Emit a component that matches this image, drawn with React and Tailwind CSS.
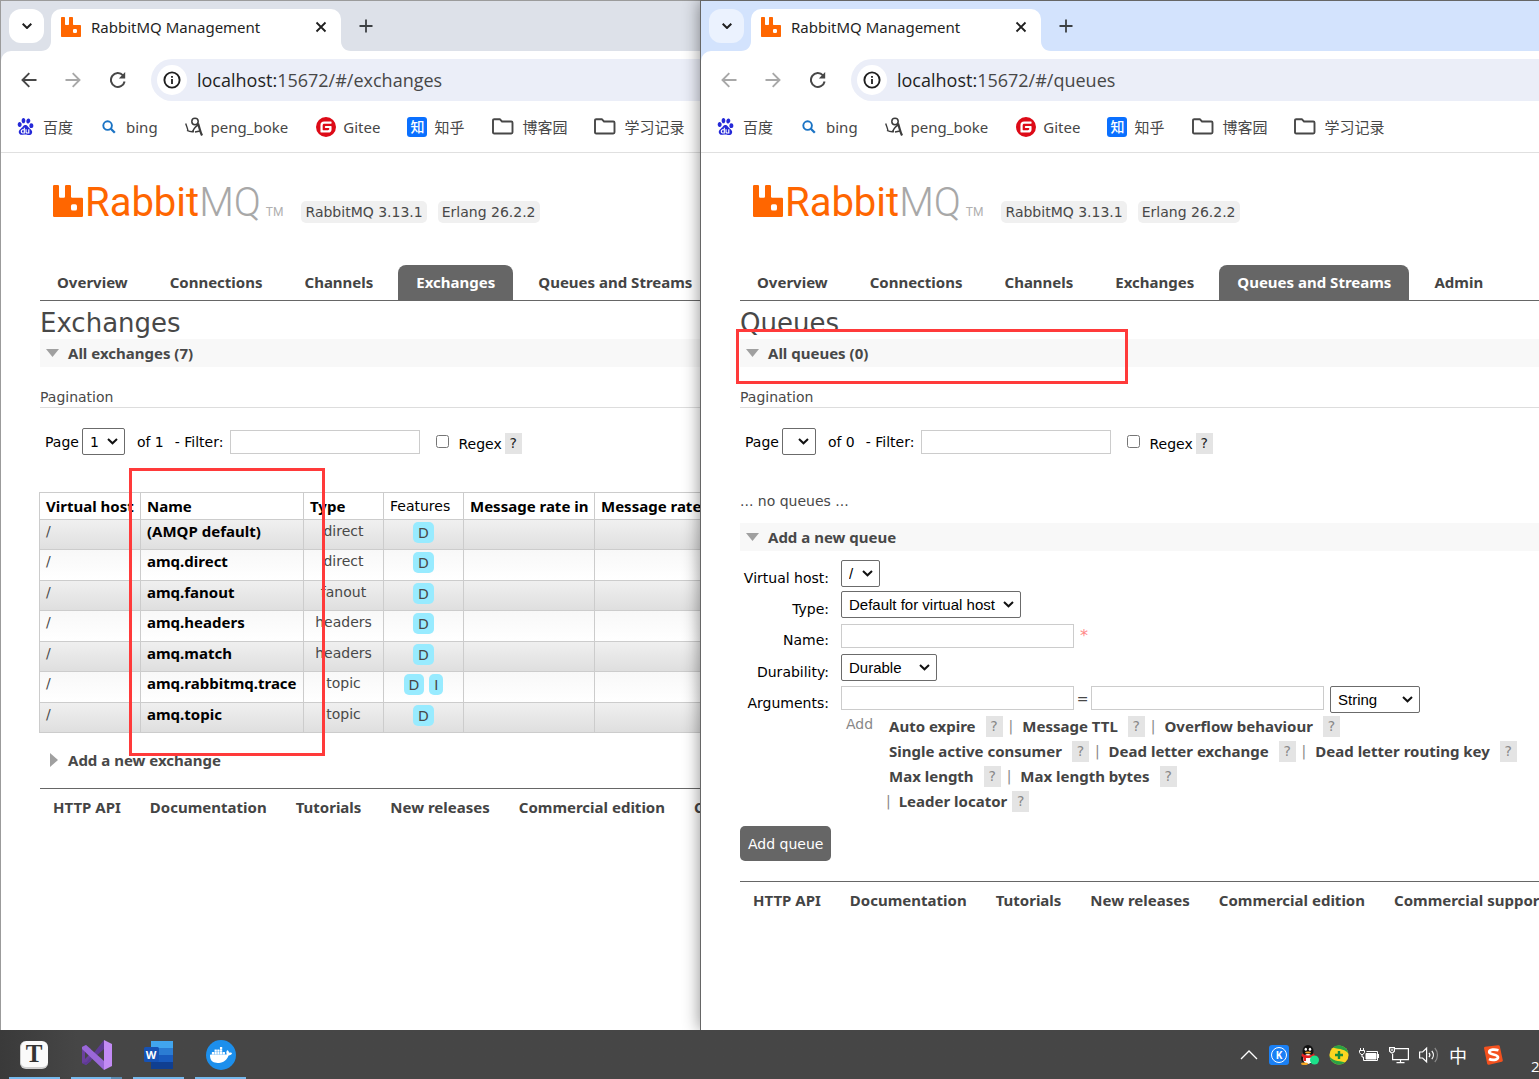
import React from "react";
import { SiRabbitmq, SiBaidu, SiGitee, SiDocker } from "react-icons/si";

const UI = "font-['Noto_Sans','Noto_Sans_CJK_SC',sans-serif]";
const PAGE = "font-['DejaVu_Sans',sans-serif]";
const STRONG = "font-['Noto_Sans',sans-serif] text-[15px] font-bold ";

/* ---------- browser chrome ---------- */

function TabFoot({ flip }) {
  return (
    <svg viewBox="0 0 10 10" className={flip ? "size-[10px] self-end -scale-x-100" : "size-[10px] self-end"}>
      <path d="M10 0v10H0C6 10 10 6 10 0z" fill="#fff" />
    </svg>
  );
}

function TabStrip({ active }) {
  return (
    <div className={active ? "flex h-[50px] items-stretch bg-[#d3e3fd] pl-2" : "flex h-[50px] items-stretch bg-[#dde1e9] pl-2"}>
      <button
        aria-label="Search tabs"
        className={
          active
            ? "mt-2 flex h-[34px] w-[35px] shrink-0 items-center justify-center rounded-xl bg-[#ebf2fe]"
            : "mt-2 flex h-[34px] w-[35px] shrink-0 items-center justify-center rounded-xl bg-white"
        }
      >
        <svg viewBox="0 0 10 6" className="h-[6px] w-[10px]" fill="none" stroke="#1f1f1f" strokeWidth="2">
          <path d="M0.7 0.7L5 5l4.3-4.3" />
        </svg>
      </button>
      <div className="-ml-[3px] flex shrink-0">
        <TabFoot />
        <div className="mt-2 flex w-[290px] items-center rounded-t-[10px] bg-white pr-[14px] pb-[7px] pl-[10px]">
          <SiRabbitmq className="size-5 shrink-0 text-[#ff6600]" />
          <span className="ml-[10px] flex-1 text-[15px] leading-5 text-[#1f1f1f]">RabbitMQ Management</span>
          <button aria-label="Close tab">
            <svg viewBox="0 0 12 12" className="size-3" fill="none" stroke="#1f1f1f" strokeWidth="1.8">
              <path d="M1.5 1.5l9 9m0-9l-9 9" />
            </svg>
          </button>
        </div>
        <TabFoot flip />
      </div>
      <button aria-label="New tab" className="ml-2 flex items-center">
        <svg viewBox="0 0 14 14" className="size-[14px]" fill="none" stroke="#3c4043" strokeWidth="1.8">
          <path d="M7 0.5v13M0.5 7h13" />
        </svg>
      </button>
    </div>
  );
}

function Arrow({ flip, dim }) {
  return (
    <svg
      viewBox="0 0 16 16"
      className={flip ? "size-4 -scale-x-100" : "size-4"}
      fill="none"
      stroke={dim ? "#a8a8a8" : "#474747"}
      strokeWidth="1.9"
    >
      <path d="M15.5 8H1.8M8.3 1.2L1.5 8l6.8 6.8" />
    </svg>
  );
}

function Toolbar({ path, active }) {
  return (
    <div className={active ? "bg-[#d3e3fd]" : "bg-[#dde1e9]"}>
      <div className="flex h-[50px] items-end rounded-tl-[10px] bg-white">
        <div className="flex h-[42px] items-center pl-5">
          <button aria-label="Back">
            <Arrow dim={active} />
          </button>
          <button aria-label="Forward" className="ml-7">
            <Arrow flip dim />
          </button>
          <button aria-label="Reload" className="ml-[29px]">
            <svg viewBox="0 0 16 16" className="size-4" fill="none" stroke="#474747" strokeWidth="2">
              <path d="M14.6 9.5A6.9 6.9 0 1 1 13 3.4" />
              <path d="M15.2 0v6.4H8.8z" fill="#474747" stroke="none" />
            </svg>
          </button>
        </div>
        <div className="ml-[25px] flex h-[42px] flex-1 items-center rounded-l-full bg-[#ebeef8] pl-[6px]">
          <button aria-label="Site information" className="flex size-[30px] items-center justify-center rounded-full bg-white">
            <svg viewBox="0 0 18 18" className="size-[18px]">
              <circle cx="9" cy="9" r="7.6" fill="none" stroke="#1f1f1f" strokeWidth="1.9" />
              <path d="M8.1 8h1.8v5H8.1zM8.1 5h1.8v1.8H8.1z" fill="#1f1f1f" />
            </svg>
          </button>
          <span className="ml-[10px] font-['Open_Sans',sans-serif] text-[18px] leading-6 whitespace-nowrap text-[#474747]">
            <span className="text-[#1f1f1f]">localhost:</span>15672/#/{path}
          </span>
        </div>
      </div>
    </div>
  );
}

function FolderIcon() {
  return (
    <svg viewBox="0 0 22 17" className="h-[17px] w-[22px]" fill="none" stroke="#474747" strokeWidth="1.9">
      <path d="M2.2 1.2h5.6l2.2 2.3h9.3q1.2 0 1.2 1.2v9.6q0 1.2-1.2 1.2H2.2Q1 15.5 1 14.3V2.4q0-1.200 1.200-1.200z" />
    </svg>
  );
}

function Bookmark({ className, icon, children }) {
  return (
    <a href="#bookmark" className={"flex shrink-0 items-center text-[15px] leading-5 whitespace-nowrap text-[#474747] " + className}>
      {icon}
      <span>{children}</span>
    </a>
  );
}

function Bookmarks() {
  return (
    <nav className="flex h-[52px] items-center overflow-hidden border-b border-[#e0e0e0] bg-white pl-4">
      <Bookmark className="gap-[9px]" icon={<SiBaidu className="size-[17px] text-[#2529d8]" />}>
        百度
      </Bookmark>
      <Bookmark
        className="ml-[29px] gap-[10px]"
        icon={
          <svg viewBox="0 0 14 14" className="size-[14px]" fill="none" stroke="#1a73c4">
            <circle cx="5.600" cy="5.600" r="4.300" strokeWidth="1.900" />
            <path d="M8.800 8.800l4 4" strokeWidth="2.300" />
          </svg>
        }
      >
        bing
      </Bookmark>
      <Bookmark
        className="ml-[27px] gap-2"
        icon={
          <svg viewBox="0 0 18 20" className="h-5 w-[18px]" fill="none" stroke="#3c3c3c">
            <circle cx="10" cy="4.500" r="3.200" strokeWidth="1.500" />
            <path d="M0.700 6.500c0.800 2 1.300 4 2.200 6.500" strokeWidth="1.400" />
            <path d="M13 6.500c1.400 3.500 2 8 4 12" strokeWidth="2.200" />
            <path d="M2 13.300c2.500 1.300 4.500 1.700 7 1.200M13.500 8c-3 0.800-4.500 3.500-6 6.500M15 14l-5 1" strokeWidth="1.500" />
          </svg>
        }
      >
        peng_boke
      </Bookmark>
      <Bookmark className="ml-7 gap-[7px]" icon={<SiGitee className="size-5 text-[#dd0a17]" />}>
        Gitee
      </Bookmark>
      <Bookmark
        className="ml-[27px] gap-[7px]"
        icon={
          <span className="flex size-5 items-center justify-center rounded-[3px] bg-[#0a70ff] text-[14px] leading-none font-medium text-white">
            知
          </span>
        }
      >
        知乎
      </Bookmark>
      <Bookmark className="ml-7 gap-2" icon={<FolderIcon />}>
        博客园
      </Bookmark>
      <Bookmark className="ml-[27px] gap-2" icon={<FolderIcon />}>
        学习记录
      </Bookmark>
    </nav>
  );
}

function BrowserWindow({ path, active, children }) {
  return (
    <section
      className={
        active
          ? "relative z-10 flex min-w-0 flex-col border-t border-l border-[#666666] bg-white shadow-[0_0_16px_rgba(0,0,0,0.45)]"
          : "relative flex min-w-0 flex-col overflow-hidden border-t border-l border-[#9b9b9b] bg-white"
      }
    >
      <div className={UI}>
        <TabStrip active={active} />
        <Toolbar path={path} active={active} />
        <Bookmarks />
      </div>
      <main className={"relative flex-1 overflow-hidden pl-[39px] text-[14px] leading-[18px] whitespace-nowrap text-[#484848] " + PAGE}>
        {children}
      </main>
    </section>
  );
}

/* ---------- management page ---------- */

function Logo() {
  return (
    <a href="#/" aria-label="RabbitMQ" className="flex h-8 items-end font-['Roboto',sans-serif]">
      <svg viewBox="0 0 24 24" preserveAspectRatio="none" className="h-8 w-[30px]" fill="#ff6600">
        <path d="M23.035 9.601h-7.677a.956.956 0 01-.962-.962V.962a.956.956 0 00-.962-.956H10.560a.956.956 0 00-.962.956V8.640a.956.956 0 01-.962.962H5.762a.956.956 0 01-.961-.962V.962A.956.956 0 003.839 0H.959a.956.956 0 00-.956.962v22.076A.956.956 0 00.965 24h22.070a.956.956 0 00.962-.962V10.580a.956.956 0 00-.962-.980zm-3.860 8.152a1.437 1.437 0 01-1.437 1.443h-1.924a1.437 1.437 0 01-1.436-1.443v-1.917a1.437 1.437 0 011.436-1.443h1.924a1.437 1.437 0 011.437 1.443z" />
      </svg>
      <span className="ml-[2px] text-[40px] leading-7 text-[#ff6600]">Rabbit</span>
      <span className="text-[40px] leading-7 font-light text-[#a8a8a8]">MQ</span>
      <span className="ml-[5px] text-[12px] leading-[10px] text-[#b0b0b0]">TM</span>
    </a>
  );
}

const MENU = ["Overview", "Connections", "Channels", "Exchanges", "Queues and Streams", "Admin"];

function Header({ current, items = MENU }) {
  return (
    <>
      <header className="flex items-end pt-8 pl-[13px]">
        <Logo />
        <div className="-mb-[6px] ml-[18px] flex gap-[11px]">
          <span className="rounded-[5px] bg-[#f0f0f0] px-[4px] py-[2px]">RabbitMQ 3.13.1</span>
          <span className="rounded-[5px] bg-[#f0f0f0] px-[4px] py-[2px]">Erlang 26.2.2</span>
        </div>
      </header>
      <nav className={"mt-12 flex gap-2 border-b border-[#666666] " + STRONG}>
        {items.map((m) => (
          <a
            key={m}
            href={"#/" + m}
            className={
              m === current
                ? "rounded-t-[8px] bg-[#666666] px-[18px] pt-2 pb-[9px] leading-[18px] text-white"
                : "px-[17px] pt-2 pb-[9px] leading-[18px] text-[#444444]"
            }
          >
            {m}
          </a>
        ))}
      </nav>
    </>
  );
}

function SectionTitle({ open, children }) {
  return (
    <h2 className={(open ? "flex h-7 items-center bg-[#f8f8f8] " : "flex h-7 items-center ") + STRONG}>
      <button className="flex items-center">
        <span className="flex w-7 items-center pl-[6px]">
          {open ? (
            <svg viewBox="0 0 13 8" className="h-2 w-[13px]">
              <path d="M0 0h13L6.500 8z" fill="#a0a0a0" />
            </svg>
          ) : (
            <svg viewBox="0 0 8 14" className="ml-1 h-[14px] w-2">
              <path d="M0 0v14l8-7z" fill="#a0a0a0" />
            </svg>
          )}
        </span>
        {children}
      </button>
    </h2>
  );
}

function Help({ dim, className }) {
  return (
    <button
      type="button"
      aria-label="Help"
      className={(dim ? "text-[#888888] " : "text-[#222222] ") + "h-[21px] w-[17px] bg-[#e4e4e4] text-center leading-[21px] " + className}
    >
      ?
    </button>
  );
}

function Select({ options, className, wrap = "", ...rest }) {
  return (
    <span className={"relative flex " + wrap}>
      <select {...rest} className={"h-[27px] appearance-none rounded-[2px] border border-[#6b6b6b] bg-white pl-[7px] text-black " + className}>
        {options.map((o) => (
          <option key={o}>{o}</option>
        ))}
      </select>
      <svg
        viewBox="0 0 11 7"
        className="pointer-events-none absolute top-[10px] right-[7px] h-[7px] w-[11px]"
        fill="none"
        stroke="#111"
        strokeWidth="2"
      >
        <path d="M1 1l4.500 4.300L10 1" />
      </svg>
    </span>
  );
}

function Pagination({ id, total, options, selectClass }) {
  return (
    <>
      <h3 className="mt-[21px] border-b border-[#dddddd] pb-px">Pagination</h3>
      <div className="mt-5 flex h-[27px] items-center pl-[5px] text-black">
        <label htmlFor={id + "-page"}>Page</label>
        <Select id={id + "-page"} options={options} wrap="ml-[3px]" className={selectClass} />
        <span className="ml-3">of {total}</span>
        <label htmlFor={id + "-filter"} className="ml-[11px]">
          - Filter:
        </label>
        <input id={id + "-filter"} type="text" className="ml-[7px] h-6 w-[190px] border border-[#cccccc] bg-white" />
        <input id={id + "-regex"} type="checkbox" className="ml-4 size-[13px]" />
        <label htmlFor={id + "-regex"} className="ml-[9px] pt-1">
          Regex
        </label>
        <Help className="mt-[3px] ml-[3px]" />
      </div>
    </>
  );
}

const EXCHANGES = [
  ["(AMQP default)", "direct", ["D"]],
  ["amq.direct", "direct", ["D"]],
  ["amq.fanout", "fanout", ["D"]],
  ["amq.headers", "headers", ["D"]],
  ["amq.match", "headers", ["D"]],
  ["amq.rabbitmq.trace", "topic", ["D", "I"]],
  ["amq.topic", "topic", ["D"]],
];

function ExchangeTable() {
  const cell = "border border-[#cccccc] px-[6px] pt-[2px] align-top";
  const head = "border border-[#cccccc] px-[6px] text-left " + STRONG;
  return (
    <table className="mt-[37px] -ml-px h-[241px] w-[764px] table-fixed border-collapse">
      <colgroup>
        <col className="w-[101px]" />
        <col className="w-[163px]" />
        <col className="w-20" />
        <col className="w-20" />
        <col className="w-[131px]" />
        <col />
      </colgroup>
      <thead className="text-black">
        <tr className="h-[27px]">
          <th className={head}>Virtual host</th>
          <th className={head}>Name</th>
          <th className={head}>Type</th>
          <th className="border border-[#cccccc] px-[6px] text-left font-normal">Features</th>
          <th className={head}>Message rate in</th>
          <th className={head}>Message rate out</th>
        </tr>
      </thead>
      <tbody>
        {EXCHANGES.map(([name, type, features], i) => (
          <tr
            key={name}
            className={i % 2 === 0 ? "bg-linear-to-b from-[#f0f0f0] to-[#dfdfdf]" : "bg-linear-to-b from-[#f8f8f8] to-white"}
          >
            <td className={cell}>/</td>
            <td className={cell}>
              <a href={"#/exchanges/" + name} className={STRONG + "text-black"}>
                {name}
              </a>
            </td>
            <td className={cell + " text-center"}>{type}</td>
            <td className="border border-[#cccccc] pt-[2px] align-top">
              <div className="flex justify-center gap-[5px]">
                {features.map((f) => (
                  <abbr key={f} className="rounded-[5px] bg-[#98ebff] px-[5px] pt-[2px] pb-px">
                    {f}
                  </abbr>
                ))}
              </div>
            </td>
            <td className={cell} />
            <td className={cell} />
          </tr>
        ))}
      </tbody>
    </table>
  );
}

const LINKS = ["HTTP API", "Documentation", "Tutorials", "New releases", "Commercial edition", "Commercial support"];

function Footer({ className }) {
  return (
    <footer className={"flex gap-[29px] border-t border-[#666666] pt-[9px] pl-[13px] " + STRONG + className}>
      {LINKS.map((l) => (
        <a key={l} href="#footer" className="shrink-0 leading-[18px] text-[#444444]">
          {l}
        </a>
      ))}
    </footer>
  );
}

function ExchangesPage() {
  return (
    <>
      <Header current="Exchanges" items={MENU.slice(0, 5)} />
      <h1 className="pt-[6px] text-[26px] leading-8">Exchanges</h1>
      <SectionTitle open>All exchanges (7)</SectionTitle>
      <Pagination id="ex" total="1" options={["1"]} selectClass="w-[43px]" />
      <ExchangeTable />
      <div className="mt-[13px]">
        <SectionTitle>Add a new exchange</SectionTitle>
      </div>
      <Footer className="mt-[14px]" />
      <div className="pointer-events-none absolute top-[315px] left-[128px] h-[288px] w-[196px] border-3 border-[#ff3a3a]" />
    </>
  );
}

const SELECT = "font-['Liberation_Sans',sans-serif] text-[15px] ";
const FIELD = "h-6 w-[233px] border border-[#cccccc] bg-white";

function Row({ id, label, className, children }) {
  return (
    <div className={"flex items-start " + className}>
      <label htmlFor={id} className="w-[89px] shrink-0 pt-[9px] text-right text-black">
        {label}
      </label>
      <div className="ml-3 flex items-start">{children}</div>
    </div>
  );
}

const ARGUMENTS = [
  ["Auto expire", "Message TTL", "Overflow behaviour"],
  ["Single active consumer", "Dead letter exchange", "Dead letter routing key"],
  ["Max length", "Max length bytes"],
];

function QueueForm() {
  return (
    <form className="pt-[9px]" onSubmit={(e) => e.preventDefault()}>
      <Row id="vhost" label="Virtual host:" className="h-[31px]">
        <Select id="vhost" options={["/"]} className={SELECT + "w-[39px]"} />
      </Row>
      <Row id="qtype" label="Type:" className="h-[31px]">
        <Select id="qtype" options={["Default for virtual host"]} className={SELECT + "w-[180px]"} />
      </Row>
      <Row id="qname" label="Name:" className="h-8">
        <input id="qname" type="text" className={FIELD + " mt-[2px]"} />
        <span className="ml-[6px] pt-[5px] text-[16px] text-[#ff8888]">*</span>
      </Row>
      <Row id="durability" label="Durability:" className="h-[31px]">
        <Select id="durability" options={["Durable"]} className={SELECT + "w-24"} />
      </Row>
      <Row id="argkey" label="Arguments:" className="h-[29px]">
        <input id="argkey" type="text" className={FIELD + " mt-px"} />
        <span className="w-[17px] pt-[5px] text-center">=</span>
        <input aria-label="Argument value" type="text" className={FIELD + " mt-px"} />
        <Select aria-label="Argument type" options={["String"]} wrap="mt-px ml-[6px]" className={SELECT + "w-[90px]"} />
      </Row>
      <div className="flex pl-[106px] leading-[25px] text-[#888888]">
        <span className="-mt-[2px] w-10">Add</span>
        <div>
          {ARGUMENTS.map((line) => (
            <div key={line[0]} className="flex h-[25px] items-center pl-[3px]">
              {line.map((a, i) => (
                <React.Fragment key={a}>
                  {i > 0 && <span className="mr-[9px] ml-[6px]">|</span>}
                  <button type="button" className={STRONG + "leading-[23px] text-[#444444]"}>
                    {a}
                  </button>
                  <Help dim className="ml-[10px]" />
                </React.Fragment>
              ))}
            </div>
          ))}
          <div className="flex h-[25px] items-center">
            <span>|</span>
            <button type="button" className={"ml-2 leading-[23px] text-[#444444] " + STRONG}>
              Leader locator
            </button>
            <Help dim className="ml-[5px]" />
          </div>
        </div>
      </div>
      <button type="submit" className="mt-3 h-[35px] rounded-[5px] bg-[#666666] px-2 text-white">
        Add queue
      </button>
    </form>
  );
}

function QueuesPage() {
  return (
    <>
      <Header current="Queues and Streams" />
      <h1 className="pt-[6px] text-[26px] leading-8">Queues</h1>
      <SectionTitle open>All queues (0)</SectionTitle>
      <Pagination id="q" total="0" options={[""]} selectClass="w-[34px]" />
      <p className="mt-[37px] mb-[13px]">... no queues ...</p>
      <SectionTitle open>Add a new queue</SectionTitle>
      <QueueForm />
      <Footer className="mt-5" />
      <div className="pointer-events-none absolute top-[176px] left-[35px] h-[55px] w-[392px] border-3 border-[#ff3a3a]" />
    </>
  );
}

/* ---------- taskbar ---------- */

function TaskButton({ label, children, split }) {
  return (
    <button aria-label={label} className="flex w-[51px] flex-col items-center">
      <span className="flex flex-1 items-center pt-[2px]">{children}</span>
      <span className="flex h-[2px] w-full bg-[#76b9ed]">{split && <span className="ml-auto h-full w-[11px] bg-[#5b8cb2]" />}</span>
    </button>
  );
}

function Taskbar() {
  return (
    <footer className="flex h-[49px] shrink-0 items-stretch overflow-hidden bg-linear-to-r from-[#3a3a3a] to-[#464646] to-5% text-white">
      <div className="flex gap-[11px] pl-[9px]">
        <TaskButton label="Typora">
          <span className="mr-[2px] flex size-7 items-center justify-center rounded-[6px] border-b-2 border-l border-[#cfcfcf] bg-[#fafafa] font-['Liberation_Serif',serif] text-[25px] leading-none font-bold text-[#333333]">
            T
          </span>
        </TaskButton>
        <TaskButton label="Visual Studio" split>
          <svg viewBox="0 0 30 30" className="size-[30px]">
            <path d="M0 7l4-2 5 4v12l-5 4-4-2z" fill="#6a3f9e" />
            <path d="M0 23l4.500-1L22 0v9L4 25z" fill="#5e3a94" />
            <path d="M0 7l4-2L22 21v9L0 9z" fill="#9a68d8" />
            <path d="M22 0l8 4v22l-8 4z" fill="#c38bf5" />
            <path d="M3 12l3.500 3.500L3 19z" fill="#464646" />
          </svg>
        </TaskButton>
        <TaskButton label="Word">
          <span className="relative">
            <svg viewBox="0 0 30 28" className="h-7 w-[30px]">
              <path d="M7 0h22v7H7z" fill="#41a5ee" />
              <path d="M7 7h22v7H7z" fill="#2b7cd3" />
              <path d="M7 14h22v7H7z" fill="#185abd" />
              <path d="M7 21h22v7H7z" fill="#103f91" />
              <rect y="6" width="15" height="15" rx="1.500" fill="#1652b4" />
            </svg>
            <span className="absolute top-[6px] left-0 w-[15px] text-center font-['Open_Sans',sans-serif] text-[11px] leading-[15px] font-bold">
              W
            </span>
          </span>
        </TaskButton>
        <TaskButton label="Docker">
          <span className="flex size-[30px] items-center justify-center rounded-full bg-[#1c8fec]">
            <SiDocker className="size-[22px] text-white" />
          </span>
        </TaskButton>
      </div>
      <div className="ml-auto flex items-center gap-[10px]">
        <svg viewBox="0 0 18 10" className="mr-px h-[10px] w-[18px]" fill="none" stroke="#fff" strokeWidth="1.300">
          <path d="M1 9l8-8 8 8" />
        </svg>
        <span className="flex size-5 items-center justify-center rounded-[3px] bg-[#1a80f5]">
          <span className="flex size-4 items-center justify-center rounded-full border border-white font-['Open_Sans',sans-serif] text-[10px] leading-none font-bold">
            K
          </span>
        </span>
        <svg viewBox="0 0 20 20" className="size-5">
          <ellipse cx="9.500" cy="13.500" rx="7.500" ry="5.500" fill="#111" />
          <ellipse cx="9" cy="6" rx="5.500" ry="6" fill="#111" />
          <ellipse cx="9" cy="14" rx="4.800" ry="5" fill="#fff" />
          <path d="M3 8.500c4 2.500 8 2.500 12 0l1 2.500c-4 2-7 2.300-9 2v3H4.500v-3.500L2.500 11z" fill="#e32020" />
          <ellipse cx="6.800" cy="4.300" rx="1.200" ry="1.500" fill="#fff" />
          <ellipse cx="11" cy="4.300" rx="1.200" ry="1.500" fill="#fff" />
          <ellipse cx="9" cy="7.400" rx="3" ry="1" fill="#f5a623" />
          <ellipse cx="5.500" cy="18.700" rx="3.500" ry="1.300" fill="#f5a623" />
          <circle cx="15.500" cy="15" r="4.500" fill="#1ce08a" />
        </svg>
        <svg viewBox="0 0 20 20" className="size-5">
          <circle cx="10" cy="10" r="9.600" fill="#fcd521" />
          <path d="M4 2.500A9.600 9.600 0 0 1 19.500 9C17 4 11 4.500 4 2.500zM16 17.500A9.600 9.600 0 0 1 0.500 11C3 16 9 15.500 16 17.500z" fill="#2ba245" />
          <path d="M10 6v8M6 10h8" stroke="#1b8c3a" strokeWidth="2.400" />
        </svg>
        <svg viewBox="0 0 20 14" className="h-[14px] w-5" fill="none" stroke="#fff">
          <path d="M7.500 3.500h11v9h-14V9M19.500 6v4" />
          <path d="M7 5.500h10v5.500H7z" fill="#fff" />
          <path d="M1.500 0v2.500M4.500 0v2.500M0.500 2.500h5v2l-1.500 2h-2l-1.500-2zM3 6.500V9h1.500" />
        </svg>
        <svg viewBox="0 0 20 18" className="h-[18px] w-5" fill="none" stroke="#fff" strokeWidth="1.200">
          <path d="M6 2.600h13.400v11H3.600V8M11.500 13.600v3M7.500 16.600h8" />
          <path d="M0.600 1.600h4.800v3.600L3.600 7h-1L0.600 5.200zM3 3v2" />
        </svg>
        <svg viewBox="0 0 20 18" className="h-[18px] w-5" fill="none" stroke="#fff" strokeWidth="1.200">
          <path d="M0.600 6v6h3l4 3.800V2.200L3.600 6z" />
          <path d="M10 6.800a3.500 3.500 0 0 1 0 4.400M12.800 4.800a6.500 6.500 0 0 1 0 8.400" />
          <path d="M15.800 2a10.500 10.500 0 0 1 0 14" stroke="#8c8c8c" />
        </svg>
        <span className="font-['Noto_Sans_CJK_SC',sans-serif] text-[18px] leading-5">中</span>
        <svg viewBox="0 0 20 20" className="ml-[6px] size-5">
          <path d="M1 3Q1 2 2 1.800L15 0.200q1.500-0.200 1.800 1l3 14q0.200 1.300-1 1.600L6 19.800q-1.500 0.200-1.800-1z" fill="#f4511e" />
          <path
            d="M15.500 5.200C12 4.200 6.200 4 6.200 7c0 3 8.800 2 8.800 5.300 0 3-6 3.200-9 1.700"
            fill="none"
            stroke="#fff"
            strokeWidth="2.700"
          />
        </svg>
        <span className="ml-[18px] w-2 pt-[22px] font-['Open_Sans',sans-serif] text-[15px] leading-5 whitespace-nowrap">2</span>
      </div>
    </footer>
  );
}

export default function App() {
  return (
    <div className="flex min-h-screen flex-col bg-white">
      <div className="grid flex-1 grid-cols-[700fr_839fr] overflow-hidden">
        <BrowserWindow path="exchanges">
          <ExchangesPage />
        </BrowserWindow>
        <BrowserWindow path="queues" active>
          <QueuesPage />
        </BrowserWindow>
      </div>
      <Taskbar />
    </div>
  );
}
